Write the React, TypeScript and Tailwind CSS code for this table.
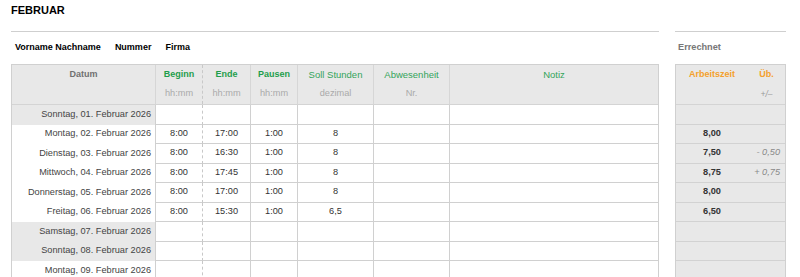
import React from "react";

const COLS = "grid grid-cols-[143px_47px_48px_47px_76px_76px_209px]";

type Row = {
  date: string;
  weekend?: boolean;
  vals?: string[];
  az?: string;
  ub?: string;
};

const rows: Row[] = [
  { date: "Sonntag, 01. Februar 2026", weekend: true },
  { date: "Montag, 02. Februar 2026", vals: ["8:00", "17:00", "1:00", "8"], az: "8,00" },
  { date: "Dienstag, 03. Februar 2026", vals: ["8:00", "16:30", "1:00", "8"], az: "7,50", ub: "- 0,50" },
  { date: "Mittwoch, 04. Februar 2026", vals: ["8:00", "17:45", "1:00", "8"], az: "8,75", ub: "+ 0,75" },
  { date: "Donnerstag, 05. Februar 2026", vals: ["8:00", "17:00", "1:00", "8"], az: "8,00" },
  { date: "Freitag, 06. Februar 2026", vals: ["8:00", "15:30", "1:00", "6,5"], az: "6,50" },
  { date: "Samstag, 07. Februar 2026", weekend: true },
  { date: "Sonntag, 08. Februar 2026", weekend: true },
  { date: "Montag, 09. Februar 2026" },
];

function HeadCell({
  title,
  titleCls,
  sub,
  border,
}: {
  title: string;
  titleCls: string;
  sub?: string;
  border: string;
}) {
  return (
    <div className={`flex flex-col ${border}`}>
      <div className={`h-[19.5px] flex items-center justify-center ${titleCls}`}>{title}</div>
      <div className="h-[19.5px] flex items-center justify-center text-[9.2px] text-[#aaa]">{sub}</div>
    </div>
  );
}

export default function App() {
  return (
    <div className="w-[800px] h-[277px] overflow-hidden bg-white font-['Liberation_Sans',Arial,sans-serif] text-[#333]">
      <div className="pl-[11px] pt-[4px] h-[31px]">
        <div className="text-[11px] leading-[13px] font-bold text-black">FEBRUAR</div>
      </div>
      <div className="flex pl-[11px] gap-[16px]">
        {/* Left */}
        <div className="w-[648px] border-t border-[#cfcfcf]">
          <div className="h-[32px] flex items-center gap-[14px] pl-[4px] text-[9px] font-bold text-black">
            <span>Vorname Nachname</span>
            <span>Nummer</span>
            <span>Firma</span>
          </div>
          <div className="border-t border-l border-r border-[#d0d0d0]">
            <div className={`${COLS} bg-[#e8e8e8] border-b border-[#d4d4d4]`}>
              <HeadCell title="Datum" titleCls="text-[9px] font-bold text-[#707070]" border="" />
              <HeadCell title="Beginn" titleCls="text-[9px] font-bold text-[#1f9e4c]" sub="hh:mm" border="border-l border-[#d6d6d6]" />
              <HeadCell title="Ende" titleCls="text-[9px] font-bold text-[#1f9e4c]" sub="hh:mm" border="border-l border-dashed border-[#c8c8c8]" />
              <HeadCell title="Pausen" titleCls="text-[9px] font-bold text-[#1f9e4c]" sub="hh:mm" border="border-l border-[#d6d6d6]" />
              <HeadCell title="Soll Stunden" titleCls="text-[9.5px] text-[#33a45a]" sub="dezimal" border="border-l border-[#d6d6d6]" />
              <HeadCell title="Abwesenheit" titleCls="text-[9.5px] text-[#33a45a]" sub="Nr." border="border-l border-[#d6d6d6]" />
              <HeadCell title="Notiz" titleCls="text-[9.5px] text-[#33a45a]" border="border-l border-[#d6d6d6]" />
            </div>
            {rows.map((r, i) => (
              <div key={i} className={`${COLS} h-[19.5px] text-[9.2px]`}>
                <div
                  className={`flex items-center justify-end pr-[4px] text-[#444] ${
                    r.weekend ? "bg-[#e8e8e8]" : "bg-white"
                  }`}
                >
                  {r.date}
                </div>
                {[0, 1, 2, 3, 4, 5].map((c) => (
                  <div
                    key={c}
                    className={`flex items-center justify-center border-b border-b-[#d0d0d0] border-l ${
                      c === 1 ? "border-l-[#c8c8c8]" : "border-l-[#d0d0d0]"
                    }`}
                    style={c === 1 ? { borderLeftStyle: "dashed" } : undefined}
                  >
                    {r.vals && c < 4 ? r.vals[c] : ""}
                  </div>
                ))}
              </div>
            ))}
          </div>
        </div>
        {/* Right */}
        <div className="w-[111px] border-t border-[#cfcfcf]">
          <div className="h-[32px] flex items-center pl-[3px] text-[9.2px] font-bold text-[#777]">Errechnet</div>
          <div className="border-t border-l border-r border-[#d0d0d0] bg-[#e8e8e8]">
            <div className="grid grid-cols-[72px_37px] border-b border-[#d4d4d4]">
              <div className="flex flex-col">
                <div className="h-[19.5px] flex items-center justify-center text-[9px] font-bold text-[#f4a02c]">Arbeitszeit</div>
                <div className="h-[19.5px]" />
              </div>
              <div className="flex flex-col">
                <div className="h-[19.5px] flex items-center justify-center text-[9px] font-bold text-[#f4a02c]">Üb.</div>
                <div className="h-[19.5px] flex items-center justify-center text-[8.5px] italic text-[#999]">+/–</div>
              </div>
            </div>
            {rows.map((r, i) => (
              <div key={i} className="grid grid-cols-[72px_37px] h-[19.5px] border-b border-[#d2d2d2] text-[9.2px]">
                <div className="flex items-center justify-center font-bold text-[#333]">{r.az ?? ""}</div>
                <div className="flex items-center justify-end pr-[5px] italic text-[#888]">{r.ub ?? ""}</div>
              </div>
            ))}
          </div>
        </div>
      </div>
    </div>
  );
}
